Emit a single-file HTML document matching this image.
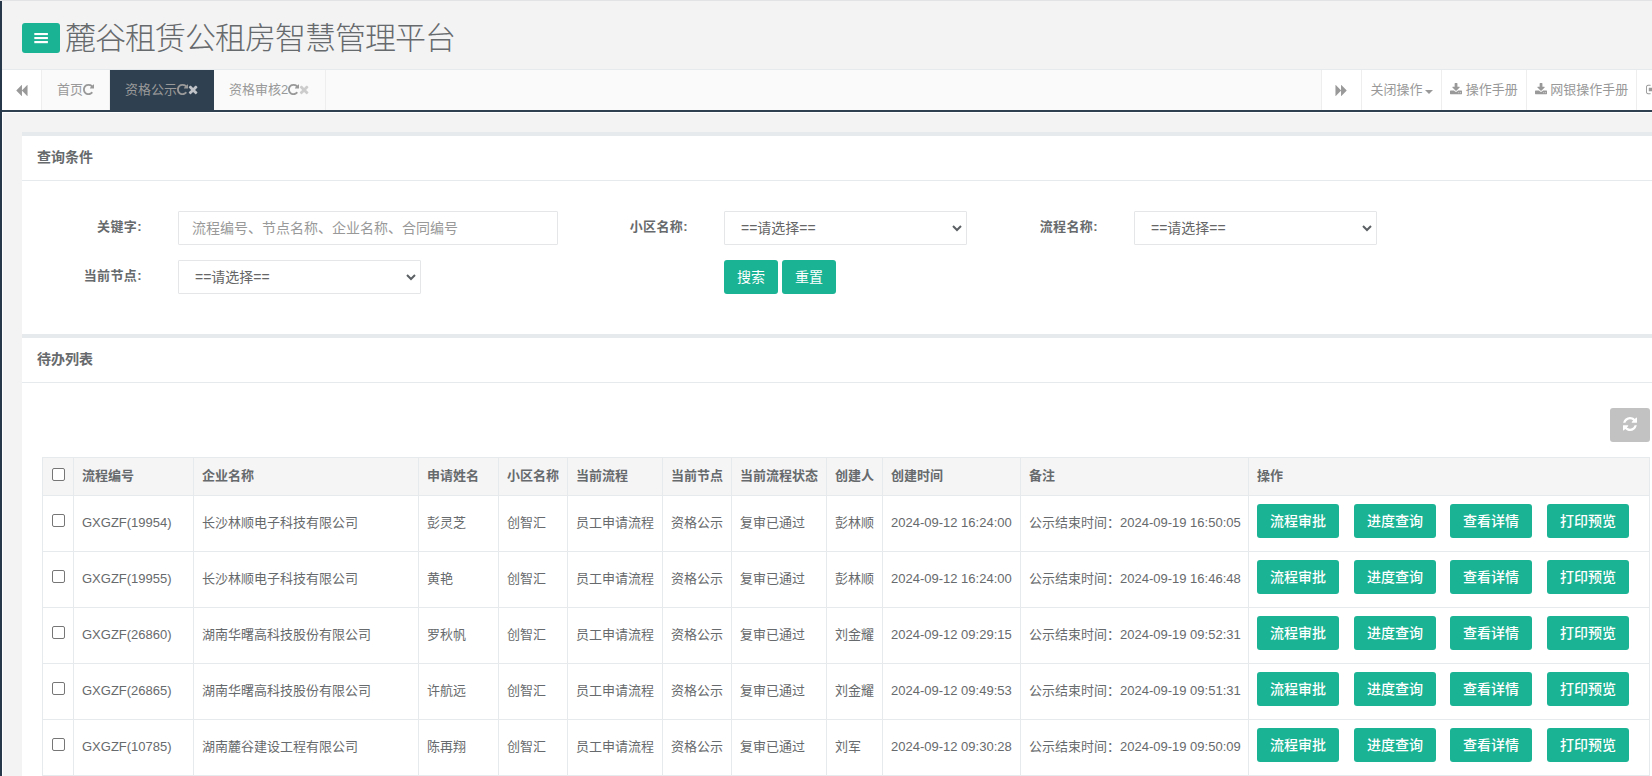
<!DOCTYPE html>
<html lang="zh-CN">
<head>
<meta charset="utf-8">
<title>麓谷租赁公租房智慧管理平台</title>
<style>
*{box-sizing:border-box;}
html,body{margin:0;padding:0;}
body{width:1652px;height:776px;overflow:hidden;position:relative;background:#f3f3f4;color:#676a6c;
 font-family:"Liberation Sans","Noto Sans CJK SC",sans-serif;font-size:13px;line-height:1.42857;}
.abs{position:absolute;}
#side{left:0;top:1px;width:2px;height:775px;background:#263849;}
#topline{left:0;top:0;width:1652px;height:1px;background:#e2e3e4;}
#frame{left:2px;top:112px;width:1650px;height:664px;border-left:1px solid #fff;border-top:1px solid #fff;}
/* header */
#burger{left:22px;top:23px;width:38px;height:30px;background:#1ab394;border-radius:3px;}
#burger svg{position:absolute;left:12px;top:10px;}
#title{left:65px;top:15px;font-size:31px;line-height:48px;font-weight:300;color:#676a6c;white-space:nowrap;letter-spacing:-1px;}
/* tabs */
#tabs{left:2px;top:69px;width:1650px;height:43px;background:#fafafa;border-top:1px solid #e7eaec;border-bottom:2px solid #2f4050;}
#tabs .cell{position:absolute;top:0;height:40px;line-height:40px;white-space:nowrap;color:#999;font-size:13px;}
.tab{padding:0 15px;border-right:1px solid #eee;}
.tab.active{background:#2f4050;color:#a7b1c2;border-right:0;}
.roll{background:#fff;text-align:center;}
.roll .arr{position:relative;top:1px;}
.fa{height:1em;vertical-align:-0.143em;display:inline-block;}
.x{color:#ccc;}
.tab.active .x{color:#c0c4c9;}
.caret{display:inline-block;width:0;height:0;margin-left:2px;vertical-align:middle;position:relative;top:1px;border-top:4px solid #999;border-right:4px solid transparent;border-left:4px solid transparent;}
/* ibox */
.ibox{left:22px;width:1640px;background:#fff;border-top:4px solid #e7eaec;}
.ibox-title{height:45px;padding:11px 15px 0;line-height:20px;font-weight:bold;font-size:14px;color:#676a6c;border-bottom:1px solid #e7eaec;}
.lbl{font-weight:bold;font-size:13px;letter-spacing:0.4px;text-align:right;width:120px;line-height:20px;}
.inp{height:34px;border:1px solid #e5e6e7;border-radius:1px;background:#fff;font-size:14px;line-height:32px;padding:0 12px;white-space:nowrap;}
.inp.ph{color:#999;font-size:14px;padding-left:13px;}
.sel{color:#666;padding-left:16px;}
.sel svg{position:absolute;right:3px;top:10px;}
.btn{background:#1ab394;color:#fff;border-radius:3px;font-size:14px;text-align:center;height:34px;line-height:34px;white-space:nowrap;}
/* table */
#tbl{left:42px;top:457px;border-collapse:collapse;table-layout:fixed;width:1607px;font-size:13px;}
#tbl th,#tbl td{border:1px solid #e7eaec;padding:0 8px;text-align:left;white-space:nowrap;overflow:hidden;vertical-align:middle;}
#tbl th{background:#f5f5f6;font-weight:bold;height:38px;}
#tbl td{height:56px;}
#tbl .ck{padding:0;text-align:center;}
.cb{position:relative;top:-3px;display:inline-block;width:13px;height:13px;border:1px solid #767676;border-radius:2px;background:#fff;vertical-align:middle;}
#tbl .op{padding:0;position:relative;}
.op .btn{position:absolute;top:8px;width:82px;font-weight:500;}
</style>
</head>
<body>
<div id="side" class="abs"></div>
<div id="topline" class="abs"></div>
<div id="frame" class="abs"></div>

<div id="burger" class="abs"><svg width="14" height="11" viewBox="0 0 14 11"><rect x="0.3" y="0" width="13.6" height="2.1" fill="#fff"/><rect x="0.3" y="4" width="13.6" height="2.1" fill="#fff"/><rect x="0.3" y="8" width="13.6" height="2.2" fill="#fff"/></svg></div>
<div id="title" class="abs">麓谷租赁公租房智慧管理平台</div>

<div id="tabs" class="abs">
  <div class="cell roll" style="left:0;width:40px;border-right:1px solid #eee;"><svg class="fa arr" style="width:1.0000em" viewBox="0 0 1792 1792"><path fill="currentColor" d="M1683 141q19-19 32-13t13 32v1472q0 26-13 32t-32-13l-710-710q-9-9-13-19v710q0 26-13 32t-32-13l-710-710q-19-19-19-45t19-45l710-710q19-19 32-13t13 32v710q4-10 13-19z"/></svg></div>
  <div class="cell tab" style="left:40px;">首页<svg class="fa" style="width:0.8571em" viewBox="128 0 1536 1792"><path fill="currentColor" d="M1664 256v448q0 26-19 45t-45 19h-448q-42 0-59-40-17-39 14-69l138-138q-148-137-349-137-104 0-198.500 40.500t-163.500 109.500-109.500 163.500-40.500 198.500 40.500 198.500 109.500 163.500 163.500 109.500 198.500 40.500q119 0 225-52t179-147q7-10 23-12 15 0 25 9l137 138q9 8 9.500 20.500t-7.500 22.500q-109 132-264 204.500t-327 72.500q-156 0-298-61t-245-164-164-245-61-298 61-298 164-245 245-164 298-61q147 0 284.500 55.500t244.500 156.500l130-129q29-31 70-14 39 17 39 59z"/></svg></div>
  <div class="cell tab active" style="left:108px;width:104px;">资格公示<svg class="fa" style="width:0.8571em" viewBox="128 0 1536 1792"><path fill="currentColor" d="M1664 256v448q0 26-19 45t-45 19h-448q-42 0-59-40-17-39 14-69l138-138q-148-137-349-137-104 0-198.500 40.500t-163.500 109.500-109.500 163.500-40.500 198.500 40.500 198.500 109.500 163.500 163.500 109.500 198.500 40.500q119 0 225-52t179-147q7-10 23-12 15 0 25 9l137 138q9 8 9.500 20.500t-7.500 22.500q-109 132-264 204.500t-327 72.500q-156 0-298-61t-245-164-164-245-61-298 61-298 164-245 245-164 298-61q147 0 284.500 55.500t244.500 156.500l130-129q29-31 70-14 39 17 39 59z"/></svg><span class="x"><svg class="fa" style="width:0.7857em" viewBox="192 0 1408 1792"><path fill="currentColor" d="M1490 1322q0 40-28 68l-136 136q-28 28-68 28t-68-28l-294-294-294 294q-28 28-68 28t-68-28l-136-136q-28-28-28-68t28-68l294-294-294-294q-28-28-28-68t28-68l136-136q28-28 68-28t68 28l294 294 294-294q28-28 68-28t68 28l136 136q28 28 28 68t-28 68l-294 294 294 294q28 28 28 68z"/></svg></span></div>
  <div class="cell tab" style="left:212px;">资格审核2<svg class="fa" style="width:0.8571em" viewBox="128 0 1536 1792"><path fill="currentColor" d="M1664 256v448q0 26-19 45t-45 19h-448q-42 0-59-40-17-39 14-69l138-138q-148-137-349-137-104 0-198.500 40.500t-163.500 109.500-109.500 163.500-40.500 198.500 40.500 198.500 109.500 163.500 163.500 109.500 198.500 40.500q119 0 225-52t179-147q7-10 23-12 15 0 25 9l137 138q9 8 9.500 20.500t-7.500 22.500q-109 132-264 204.500t-327 72.500q-156 0-298-61t-245-164-164-245-61-298 61-298 164-245 245-164 298-61q147 0 284.500 55.500t244.500 156.500l130-129q29-31 70-14 39 17 39 59z"/></svg><span class="x"><svg class="fa" style="width:0.7857em" viewBox="192 0 1408 1792"><path fill="currentColor" d="M1490 1322q0 40-28 68l-136 136q-28 28-68 28t-68-28l-294-294-294 294q-28 28-68 28t-68-28l-136-136q-28-28-28-68t28-68l294-294-294-294q-28-28-28-68t28-68l136-136q28-28 68-28t68 28l294 294 294-294q28-28 68-28t68 28l136 136q28 28 28 68t-28 68l-294 294 294 294q28 28 28 68z"/></svg></span></div>
  <div class="cell roll" style="left:1319px;width:40px;border-left:1px solid #eee;"><svg class="fa arr" style="width:1.0000em" viewBox="0 0 1792 1792"><path fill="currentColor" d="M109 1651q-19 19-32 13t-13-32v-1472q0-26 13-32t32 13l710 710q9 9 13 19v-710q0-26 13-32t32 13l710 710q19 19 19 45t-19 45l-710 710q-19 19-32 13t-13-32v-710q-4 10-13 19z"/></svg></div>
  <div class="cell roll" style="left:1359px;width:80px;border-left:1px solid #eee;">关闭操作<span class="caret"></span></div>
  <div class="cell roll" style="left:1439px;width:85px;border-left:1px solid #eee;"><svg class="fa" style="width:0.9286em" viewBox="64 0 1664 1792"><path fill="currentColor" d="M1344 1344q0-26-19-45t-45-19-45 19-19 45 19 45 45 19 45-19 19-45zm256 0q0-26-19-45t-45-19-45 19-19 45 19 45 45 19 45-19 19-45zm128-224v320q0 40-28 68t-68 28h-1472q-40 0-68-28t-28-68v-320q0-40 28-68t68-28h465l135 136q58 56 136 56t136-56l136-136h464q40 0 68 28t28 68zm-325-569q17 41-14 70l-448 448q-18 19-45 19t-45-19l-448-448q-31-29-14-70 17-39 59-39h256v-448q0-26 19-45t45-19h256q26 0 45 19t19 45v448h256q42 0 59 39z"/></svg> 操作手册</div>
  <div class="cell roll" style="left:1524px;width:110px;border-left:1px solid #eee;"><svg class="fa" style="width:0.9286em" viewBox="64 0 1664 1792"><path fill="currentColor" d="M1344 1344q0-26-19-45t-45-19-45 19-19 45 19 45 45 19 45-19 19-45zm256 0q0-26-19-45t-45-19-45 19-19 45 19 45 45 19 45-19 19-45zm128-224v320q0 40-28 68t-68 28h-1472q-40 0-68-28t-28-68v-320q0-40 28-68t68-28h465l135 136q58 56 136 56t136-56l136-136h464q40 0 68 28t28 68zm-325-569q17 41-14 70l-448 448q-18 19-45 19t-45-19l-448-448q-31-29-14-70 17-39 59-39h256v-448q0-26 19-45t45-19h256q26 0 45 19t19 45v448h256q42 0 59 39z"/></svg> 网银操作手册</div>
  <div class="cell roll" style="left:1634px;width:20px;border-left:1px solid #eee;text-align:left;padding-left:9px;"><svg class="fa" style="width:0.9286em" viewBox="64 0 1664 1792"><path fill="currentColor" d="M704 1440q0 4 1 20t.5 26.500-3 23.500-10 19.500-20.500 6.500h-320q-119 0-203.500-84.500t-84.500-203.500v-704q0-119 84.500-203.500t203.500-84.500h320q13 0 22.500 9.500t9.500 22.500q0 4 1 20t.5 26.500-3 23.500-10 19.500-20.500 6.500h-320q-66 0-113 47t-47 113v704q0 66 47 113t113 47h312l11.500 1 11.500 3 8 5.500 7 9 2 13.500zm928-544q0 26-19 45l-544 544q-19 19-45 19t-45-19-19-45v-288h-448q-26 0-45-19t-19-45v-384q0-26 19-45t45-19h448v-288q0-26 19-45t45-19 45 19l544 544q19 19 19 45z"/></svg></div>
</div>

<div class="ibox abs" style="top:132px;height:202px;">
  <div class="ibox-title">查询条件</div>
</div>
<div class="lbl abs" style="left:22px;top:217px;">关键字:</div>
<div class="inp ph abs" style="left:178px;top:211px;width:380px;">流程编号、节点名称、企业名称、合同编号</div>
<div class="lbl abs" style="left:568px;top:217px;">小区名称:</div>
<div class="inp sel abs" style="left:724px;top:211px;width:243px;">==请选择==<svg width="12" height="12" viewBox="0 0 12 12"><path d="M2 4l4 4 4-4" stroke="#5b6064" stroke-width="2" fill="none"/></svg></div>
<div class="lbl abs" style="left:978px;top:217px;">流程名称:</div>
<div class="inp sel abs" style="left:1134px;top:211px;width:243px;">==请选择==<svg width="12" height="12" viewBox="0 0 12 12"><path d="M2 4l4 4 4-4" stroke="#5b6064" stroke-width="2" fill="none"/></svg></div>
<div class="lbl abs" style="left:22px;top:266px;">当前节点:</div>
<div class="inp sel abs" style="left:178px;top:260px;width:243px;">==请选择==<svg width="12" height="12" viewBox="0 0 12 12"><path d="M2 4l4 4 4-4" stroke="#5b6064" stroke-width="2" fill="none"/></svg></div>
<div class="btn abs" style="left:724px;top:260px;width:54px;">搜索</div>
<div class="btn abs" style="left:782px;top:260px;width:54px;">重置</div>

<div class="ibox abs" style="top:334px;height:450px;">
  <div class="ibox-title">待办列表</div>
</div>
<div class="abs" style="left:1610px;top:408px;width:40px;height:34px;background:#c2c2c2;border-radius:3px;"><svg style="position:absolute;left:13px;top:9px" width="14" height="14" viewBox="128 128 1536 1536"><path fill="#fff" d="M1639 1056q0 5-1 7-64 268-268 434.500t-478 166.500q-146 0-282.500-55t-243.500-157l-129 129q-19 19-45 19t-45-19-19-45v-448q0-26 19-45t45-19h448q26 0 45 19t19 45-19 45l-137 137q71 66 161 102t187 36q134 0 250-65t186-179q11-17 53-117 8-23 30-23h192q13 0 22.500 9.500t9.500 22.500zm25-800v448q0 26-19 45t-45 19h-448q-26 0-45-19t-19-45 19-45l138-138q-148-137-349-137-134 0-250 65t-186 179q-11 17-53 117-8 23-30 23h-199q-13 0-22.500-9.500t-9.500-22.500v-7q65-268 270-434.500t480-166.500q146 0 284 55.500t245 156.500l130-129q19-19 45-19t45 19 19 45z"/></svg></div>

<table id="tbl" class="abs">
<colgroup><col style="width:31px"><col style="width:120px"><col style="width:225px"><col style="width:80px"><col style="width:69px"><col style="width:95px"><col style="width:69px"><col style="width:95px"><col style="width:56px"><col style="width:138px"><col style="width:228px"><col style="width:401px"></colgroup>
<thead><tr><th class="ck"><span class="cb" style="top:-2px"></span></th><th>流程编号</th><th>企业名称</th><th>申请姓名</th><th>小区名称</th><th>当前流程</th><th>当前节点</th><th>当前流程状态</th><th>创建人</th><th>创建时间</th><th>备注</th><th>操作</th></tr></thead>
<tbody>
<tr><td class="ck"><span class="cb"></span></td><td>GXGZF(19954)</td><td>长沙林顺电子科技有限公司</td><td>彭灵芝</td><td>创智汇</td><td>员工申请流程</td><td>资格公示</td><td>复审已通过</td><td>彭林顺</td><td>2024-09-12 16:24:00</td><td>公示结束时间：2024-09-19 16:50:05</td><td class="op"><div class="btn" style="left:8px">流程审批</div><div class="btn" style="left:105px">进度查询</div><div class="btn" style="left:201px">查看详情</div><div class="btn" style="left:298px">打印预览</div></td></tr>
<tr><td class="ck"><span class="cb"></span></td><td>GXGZF(19955)</td><td>长沙林顺电子科技有限公司</td><td>黄艳</td><td>创智汇</td><td>员工申请流程</td><td>资格公示</td><td>复审已通过</td><td>彭林顺</td><td>2024-09-12 16:24:00</td><td>公示结束时间：2024-09-19 16:46:48</td><td class="op"><div class="btn" style="left:8px">流程审批</div><div class="btn" style="left:105px">进度查询</div><div class="btn" style="left:201px">查看详情</div><div class="btn" style="left:298px">打印预览</div></td></tr>
<tr><td class="ck"><span class="cb"></span></td><td>GXGZF(26860)</td><td>湖南华曙高科技股份有限公司</td><td>罗秋帆</td><td>创智汇</td><td>员工申请流程</td><td>资格公示</td><td>复审已通过</td><td>刘金耀</td><td>2024-09-12 09:29:15</td><td>公示结束时间：2024-09-19 09:52:31</td><td class="op"><div class="btn" style="left:8px">流程审批</div><div class="btn" style="left:105px">进度查询</div><div class="btn" style="left:201px">查看详情</div><div class="btn" style="left:298px">打印预览</div></td></tr>
<tr><td class="ck"><span class="cb"></span></td><td>GXGZF(26865)</td><td>湖南华曙高科技股份有限公司</td><td>许航远</td><td>创智汇</td><td>员工申请流程</td><td>资格公示</td><td>复审已通过</td><td>刘金耀</td><td>2024-09-12 09:49:53</td><td>公示结束时间：2024-09-19 09:51:31</td><td class="op"><div class="btn" style="left:8px">流程审批</div><div class="btn" style="left:105px">进度查询</div><div class="btn" style="left:201px">查看详情</div><div class="btn" style="left:298px">打印预览</div></td></tr>
<tr><td class="ck"><span class="cb"></span></td><td>GXGZF(10785)</td><td>湖南麓谷建设工程有限公司</td><td>陈再翔</td><td>创智汇</td><td>员工申请流程</td><td>资格公示</td><td>复审已通过</td><td>刘军</td><td>2024-09-12 09:30:28</td><td>公示结束时间：2024-09-19 09:50:09</td><td class="op"><div class="btn" style="left:8px">流程审批</div><div class="btn" style="left:105px">进度查询</div><div class="btn" style="left:201px">查看详情</div><div class="btn" style="left:298px">打印预览</div></td></tr>
</tbody>
</table>
</body>
</html>
